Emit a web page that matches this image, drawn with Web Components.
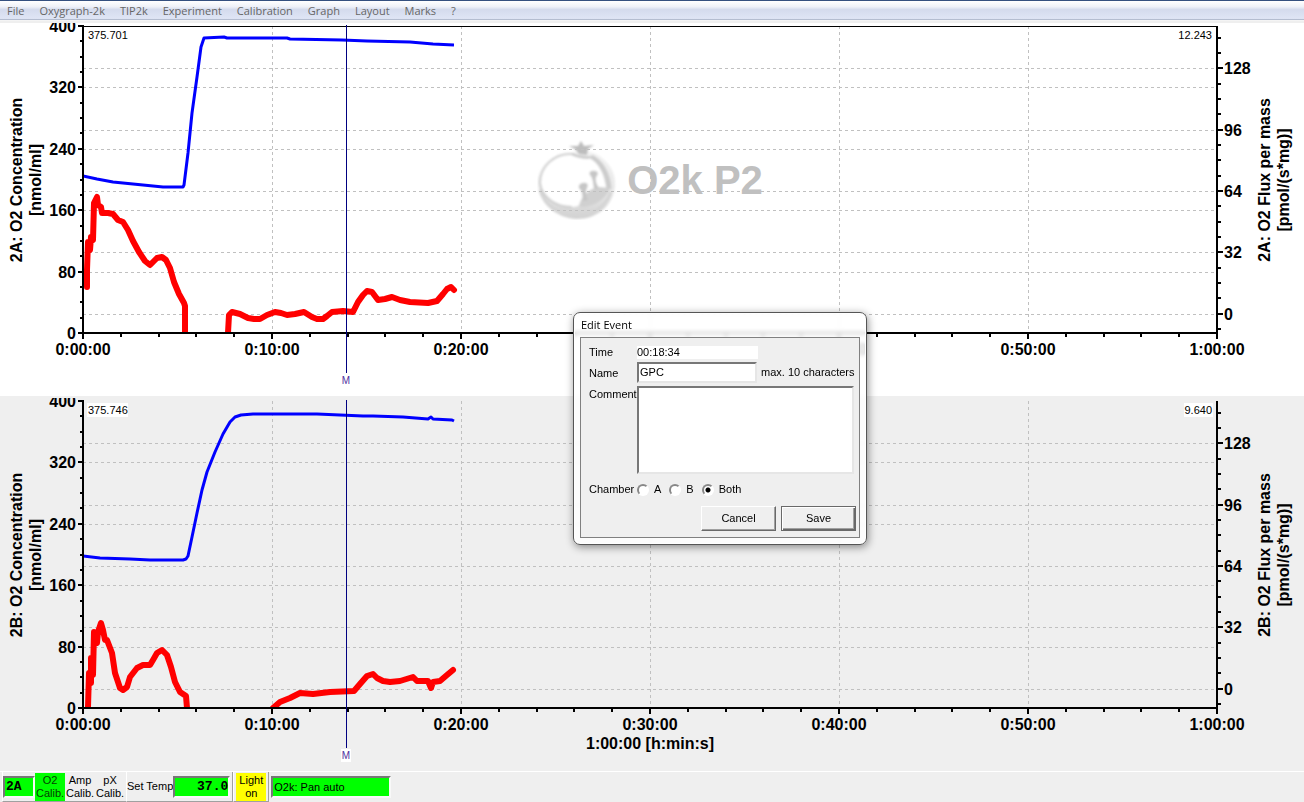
<!DOCTYPE html>
<html lang="en">
<head>
<meta charset="utf-8">
<title>Oxygraph-2k</title>
<style>
  html, body {
    margin: 0;
    height: 100%;
  }

  body {
    font-family: "Liberation Sans", Arial, sans-serif;
    font-size: 11px;
    color: #000;
    background: #efefef;
  }
</style>
</head>
<body>
<o2k-app></o2k-app>

<script>
const MENU = ["File", "Oxygraph-2k", "TIP2k", "Experiment", "Calibration", "Graph", "Layout", "Marks", "?"];

// trace points, in units of a 1134 x 307 plot
const TRACES = {
    A: {
        conc: ["0,150 14,153 30,156 50,158 80,161 100,161 101,159 105,127 109,87 114,51 118,21 121,12 141,11 144,12 204,12 207,13 259,14 284,15 327,16 350,18 371,19"],
        flux: [
            "4,261 4,244 5,216 7,224 8,211 10,214 11,177 14,171 15,179 18,181 19,187 25,187 30,188 35,194 40,196 45,204 50,215 56,226 62,235 67,239 70,236 74,232 79,231 83,234 87,242 91,256 96,268 101,277 102,280 102,307",
            "145,307 146,289 149,286 157,288 165,292 171,293 177,293 184,289 192,286 198,287 204,289 212,288 221,286 229,291 234,293 240,293 244,290 249,286 260,285 270,286 275,276 280,269 284,265 289,266 295,274 302,273 309,271 317,274 327,276 345,277 354,275 360,268 364,263 368,261 371,264"
        ]
    },
    B: {
        conc: ["0,155 17,157 47,158 67,159 100,159 103,158 105,155 109,136 114,112 119,89 124,71 132,51 140,33 147,21 152,16 158,14 170,13 234,13 280,15 290,15 320,16 345,18 348,16 350,18 369,19 371,20"],
        flux: [
            "5,306 6,272 8,282 8,257 10,274 11,231 14,242 15,231 18,222 20,229 22,239 24,239 29,252 32,272 37,287 40,289 44,286 47,276 54,267 60,264 67,264 70,259 74,252 79,249 84,254 88,266 92,281 97,291 103,295 104,307",
            "190,307 197,301 207,297 217,292 230,293 247,291 271,290 277,283 284,275 290,273 294,277 300,280 307,281 317,280 330,276 334,280 345,280 348,287 350,281 357,280 364,274 370,269"
        ]
    }
};

class MenuBar extends HTMLElement {
    constructor() {
        super();
        this.attachShadow({ mode: "open" });
    }

    connectedCallback() {
        this.shadowRoot.innerHTML = `
      <style>
        :host {
          display: block;
          box-sizing: border-box;
          height: 21px;
          border-top: 1px solid #34507f;
          border-bottom: 1px solid #f4f4f4;
          background: linear-gradient(#fff, #eef1f8 30%, #d4dbed 45%, #dfe5f5 92%, #b4bdd0 95%);
        }

        nav {
          display: flex;
          gap: 15px;
          padding: 0 7px;
        }

        button {
          border: 0;
          padding: 0;
          background: none;
          color: #666;
          font: 11px/19px "Open Sans", "Noto Sans", sans-serif;
        }
      </style>
      <nav>${MENU.map(item => `<button type="button">${item}</button>`).join("")}</nav>
    `;
    }
}

class PomegranateLogo extends HTMLElement {
    constructor() {
        super();
        this.attachShadow({ mode: "open" });
    }

    connectedCallback() {
        this.shadowRoot.innerHTML = `
      <style>
        :host {
          display: flex;
          align-items: center;
          gap: 10px;
          color: #c0c0c0;
          font: bold 40px/40px "Liberation Sans", Arial, sans-serif;
        }

        svg {
          display: block;
        }
      </style>
      <svg width="80" height="80" viewBox="0 0 80 80">
        <defs>
          <linearGradient id="skin" x1="0" y1="0" x2="0" y2="1">
            <stop offset="0" stop-color="#f2f2f2"/>
            <stop offset="0.6" stop-color="#e8e8e8"/>
            <stop offset="1" stop-color="#d0d0d0"/>
          </linearGradient>
          <filter id="soft"><feGaussianBlur stdDeviation="1"/></filter>
        </defs>
        <g filter="url(#soft)">
          <path d="M33 14C38 10 50 10 59 14C72 21 79 33 78 46C76 66 60 79 40 79C18 78 1 62 1 43C1 25 17 13 33 14Z" fill="url(#skin)"/>
          <path d="M3 50C8 66 22 76 40 76C56 76 68 67 74 52" fill="none" stroke="#d4d4d4" stroke-width="3"/>
          <path d="M54 17C64 22 71 34 72 49" fill="none" stroke="#cccccc" stroke-width="5"/>
          <path d="M35 14C17 13 3 27 3 43C5 58 19 67 35 67C41 67 44 64 47 61L59 50L69 48C67 35 62 22 52 18C46 18 41 17 35 14Z" fill="#fff"/>
          <path d="M52 18C46 18 41 17 35 14C17 13 3 27 3 43C5 58 19 67 35 67" fill="none" stroke="#cfcfcf" stroke-width="2"/>
          <path d="M42 66C43 58 52 48 62 47L73 48C70 58 58 66 46 67Z" fill="#d0d0d0"/>
          <path d="M46 61C45 54 46 52 42 48C41 45 44 43 46 43C50 42 52 45 50 48C48 52 49 56 51 60ZM57 49C56 42 56 38 53 35C51 32 55 30 58 31C61 31 62 34 59 37C58 41 60 45 62 48Z" fill="#c6c6c6"/>
          <path d="M42 14L38 9L32 6L41 6L44 1L47 6L57 5L51 9L50 15Z" fill="#bdbdbd"/>
          <path d="M35 14C41 17 47 18 54 17" fill="none" stroke="#c9c9c9" stroke-width="2"/>
        </g>
      </svg>
      <slot></slot>
    `;
    }
}

class O2kChart extends HTMLElement {
    constructor() {
        super();
        this.attachShadow({ mode: "open" });
    }

    connectedCallback() {
        this.render();
        this.onResize = () => this.render();
        window.addEventListener("resize", this.onResize);
    }

    disconnectedCallback() {
        window.removeEventListener("resize", this.onResize);
    }

    render() {
        const name = this.getAttribute("chamber");
        const shaded = this.hasAttribute("shaded");
        const bg = shaded ? "#efefef" : "#fff";
        const width = this.clientWidth;
        const height = this.offsetHeight;
        const left = 83;
        const right = width - 87;
        const top = 5;
        const bottom = height - 63;
        const plotW = right - left;
        const plotH = bottom - top;
        const middle = Math.round(top + plotH / 2);
        const cursor = Math.round(left + plotW * 0.2319);
        let grid = "";
        let ticks = "";
        let labels = "";

        // left axis: 0 to 400, 20 a tick
        for (let v = 0; v <= 400; v += 20) {
            const y = Math.round(bottom - plotH * v / 400);
            const major = v % 80 === 0;
            ticks += `<path d="M${left - (major ? 5 : 3)} ${y}H${left}"/>`;
            if (major) {
                labels += `<text x="${left - 7}" y="${y + 6}" text-anchor="end">${v}</text>`;
                if (v > 0 && v < 400) grid += `<path d="M${left} ${y + 0.5}H${right}"/>`;
            }
        }

        // right axis: -10 to 150, 8 a tick
        for (let v = -8; v <= 144; v += 8) {
            const y = Math.round(bottom - plotH * (v + 10) / 160);
            const major = v % 32 === 0;
            ticks += `<path d="M${right} ${y}H${right + (major ? 6 : 4)}"/>`;
            if (major) {
                labels += `<text x="${right + 7}" y="${y + 6}">${v}</text>`;
                grid += `<path d="M${left} ${y + 0.5}H${right}"/>`;
            }
        }

        // time axis: one hour, 2 minutes a tick
        for (let m = 0; m <= 60; m += 2) {
            const x = Math.round(left + plotW * m / 60);
            const major = m % 10 === 0;
            ticks += `<path d="M${x} ${bottom}V${bottom + (major ? 6 : 4)}"/>`;
            if (major) {
                const time = m === 60 ? "1:00:00" : `0:${String(m).padStart(2, "0")}:00`;
                labels += `<text x="${x}" y="${bottom + 22}" text-anchor="middle">${time}</text>`;
                if (m > 0 && m < 60) grid += `<path d="M${x + 0.5} ${top}V${bottom}"/>`;
            }
        }

        const lines = (list, cls) => list.map(p => `<polyline class="${cls}" points="${p}"/>`).join("");

        this.shadowRoot.innerHTML = `
      <style>
        :host {
          display: block;
          position: relative;
          box-sizing: border-box;
          flex: 1 0 300px;
          min-width: 0;
          border-top: 2px solid #efefef;
          overflow: hidden;
          background: ${bg};
        }

        .chart {
          display: block;
          position: relative;
          margin-top: -2px;
        }

        .grid path {
          stroke: #c0c0c0;
          stroke-dasharray: 3 3;
        }

        .axes path {
          stroke: #000;
          stroke-width: 2;
        }

        .labels text, .titles text {
          font: bold 16px "Liberation Sans", Arial, sans-serif;
        }

        .titles text {
          text-anchor: middle;
        }

        .values {
          font: 11px "Liberation Sans", Arial, sans-serif;
        }

        .conc, .flux {
          fill: none;
          stroke: #00f;
          stroke-width: 3;
          stroke-linejoin: round;
          vector-effect: non-scaling-stroke;
        }

        .flux {
          stroke: #f00;
          stroke-width: 6;
          stroke-linecap: round;
        }

        .mark {
          font: 10px "Liberation Sans", Arial, sans-serif;
          fill: #5030a0;
        }

        slot {
          position: absolute;
          top: 117px;
          left: ${left}px;
          right: 87px;
          display: flex;
          justify-content: center;
        }
      </style>
      <slot></slot>
      <svg class="chart" width="${width}" height="${height}">
        <g class="grid">${grid}</g>
        ${shaded ? "" : `<path d="M${left} ${top + 0.5}H${right}" stroke="#000"/>`}
        <svg x="${left}" y="${top}" width="${plotW}" height="${plotH}" viewBox="0 0 1134 307" preserveAspectRatio="none">
          ${lines(TRACES[name].conc, "conc")}
          ${lines(TRACES[name].flux, "flux")}
        </svg>
        <g class="axes">
          ${ticks}
          <path d="M${left} ${top - 1}V${bottom}M${left} ${bottom}H${right}M${right} ${top}V${bottom}"/>
        </g>
        <g class="labels">
          ${labels}
          ${this.hasAttribute("time-title") ? `<text x="${left + plotW / 2}" y="${bottom + 41}" text-anchor="middle">1:00:00 [h:min:s]</text>` : ""}
        </g>
        <g class="titles">
          <text transform="translate(22 ${middle}) rotate(-90)">2${name}: O2 Concentration</text>
          <text transform="translate(41 ${middle}) rotate(-90)">[nmol/ml]</text>
          <text transform="translate(${width - 34} ${middle}) rotate(-90)">2${name}: O2 Flux per mass</text>
          <text transform="translate(${width - 15} ${middle}) rotate(-90)">[pmol/(s*mg)]</text>
        </g>
        <g class="values">
          <rect x="${left + 4}" y="${top + 2}" width="41" height="14" fill="#fff"/>
          <text x="${left + 5}" y="${top + 13}">${this.getAttribute("conc")}</text>
          <rect x="${right - 33}" y="${top + 2}" width="29" height="14" fill="#fff"/>
          <text x="${right - 5}" y="${top + 13}" text-anchor="end">${this.getAttribute("flux")}</text>
        </g>
        <path d="M${cursor + 0.5} ${top - 1}V${bottom + 40}" stroke="#000080"/>
        <rect x="${cursor - 5}" y="${bottom + 41}" width="10" height="13" fill="#fff"/>
        <text class="mark" x="${cursor}" y="${bottom + 51}" text-anchor="middle">M</text>
      </svg>
    `;
    }
}

class EventDialog extends HTMLElement {
    constructor() {
        super();
        this.attachShadow({ mode: "open" });
    }

    connectedCallback() {
        this.shadowRoot.innerHTML = `
      <style>
        :host {
          display: block;
          position: absolute;
          z-index: 2;
          left: 573px;
          top: 312px;
          box-sizing: border-box;
          width: 294px;
          padding: 0 6px 6px;
          border: 1px solid #555;
          border-radius: 7px;
          background: rgba(255, 255, 255, 0.8);
          backdrop-filter: blur(2px);
          box-shadow: inset 0 0 0 1px #fff, 1px 2px 8px rgba(0, 0, 0, 0.45);
        }

        h1 {
          margin: 0;
          padding: 0 1px;
          font: 11px/24px "Open Sans", "Noto Sans", sans-serif;
        }

        form {
          display: grid;
          grid-template-columns: 48px 1fr;
          row-gap: 3px;
          padding: 8px 3px 6px 8px;
          border: 1px solid #808080;
          background: #efefef;
          line-height: 13px;
        }

        .row {
          display: flex;
          align-items: center;
          gap: 4px;
        }

        .name {
          padding-top: 5px;
        }

        .comment {
          padding-top: 2px;
        }

        input, textarea, button {
          box-sizing: border-box;
          margin: 0;
          font: inherit;
          color: inherit;
          border-radius: 0;
          outline: 0;
        }

        #time {
          width: 121px;
          height: 13px;
          padding: 0;
          border: 0;
        }

        #name {
          width: 120px;
          height: 21px;
          padding: 0 1px 2px;
        }

        #name, textarea {
          border: 2px solid;
          border-color: #777 #e6e6e6 #e6e6e6 #777;
          background: #fff;
        }

        textarea {
          display: block;
          width: 217px;
          height: 88px;
          resize: none;
        }

        fieldset {
          grid-column: 1 / 3;
          display: flex;
          align-items: center;
          margin: 0;
          padding: 6px 0 7px;
          border: 0;
        }

        .legend {
          width: 48px;
        }

        .choice {
          display: flex;
          align-items: center;
          gap: 5px;
          margin-right: 8px;
        }

        input[type=radio] {
          appearance: none;
          width: 12px;
          height: 12px;
          border: 2px solid;
          border-color: #888 #fff #fff #888;
          border-radius: 50%;
          background: #fff;
        }

        input[type=radio]:checked {
          background: radial-gradient(circle, #000 2px, #fff 3px);
        }

        .buttons {
          grid-column: 1 / 3;
          display: flex;
          justify-content: flex-end;
          gap: 5px;
        }

        button {
          width: 75px;
          height: 25px;
          padding: 0;
          border: 1px solid;
          border-color: #fff #696969 #696969 #fff;
          background: #efefef;
          box-shadow: inset -1px -1px #a0a0a0;
        }

        .default {
          border-color: #696969;
          box-shadow: inset 1px 1px #fff, inset -1px -1px #696969, inset -2px -2px #a0a0a0;
        }
      </style>
      <h1>Edit Event</h1>
      <form>
        <label for="time">Time</label>
        <div class="row"><input id="time" value="00:18:34" readonly></div>
        <label for="name" class="name">Name</label>
        <div class="row"><input id="name" value="GPC" maxlength="10"><span>max. 10 characters</span></div>
        <label for="comment" class="comment">Comment</label>
        <textarea id="comment"></textarea>
        <fieldset aria-label="Chamber">
          <span class="legend">Chamber</span>
          <label class="choice"><input type="radio" name="chamber">A</label>
          <label class="choice"><input type="radio" name="chamber">B</label>
          <label class="choice"><input type="radio" name="chamber" checked>Both</label>
        </fieldset>
        <div class="buttons">
          <button type="button">Cancel</button>
          <button type="button" class="default">Save</button>
        </div>
      </form>
    `;
    }
}

class StatusBar extends HTMLElement {
    constructor() {
        super();
        this.attachShadow({ mode: "open" });
    }

    connectedCallback() {
        this.shadowRoot.innerHTML = `
      <style>
        :host {
          display: flex;
          box-sizing: border-box;
          height: 31px;
          padding-left: 2px;
          border-top: 1px solid #fff;
          background: #efefef;
          line-height: 13px;
        }

        .group {
          display: flex;
          align-items: center;
          box-sizing: border-box;
          padding-right: 1px;
          border-bottom: 1px solid #a0a0a0;
          border-left: 1px solid #fff;
        }

        .closed {
          padding-right: 2px;
          border-right: 1px solid #a0a0a0;
        }

        .last {
          border: 0;
        }

        button {
          width: 30px;
          height: 28px;
          margin: 0;
          padding: 0;
          border: 0;
          background: none;
          color: inherit;
          font: inherit;
        }

        .box {
          box-sizing: border-box;
          height: 22px;
          margin: 0;
          padding: 0 1px;
          border: 2px solid;
          border-color: #777 #f8f8f8 #f8f8f8 #777;
          border-radius: 0;
          background: #0f0;
          color: #000;
          font: 11px/18px "Liberation Sans", Arial, sans-serif;
        }

        .mono {
          width: 32px;
          font: bold 13px/18px "Liberation Mono", monospace;
        }

        #temp {
          width: 57px;
          padding: 0;
          text-align: right;
        }

        .state {
          width: 120px;
          margin-left: 2px;
        }

        .on { background: #0f0; color: #044000; }
        .lit { background: #ff0; margin-left: 2px; }
      </style>
      <div class="group">
        <div class="box mono">2A</div>
        <button type="button" class="on">O2<br>Calib.</button>
        <button type="button">Amp<br>Calib.</button>
        <button type="button">pX<br>Calib.</button>
      </div>
      <div class="group closed">
        <label for="temp">Set Temp</label>
        <input id="temp" class="box mono" value="37.0">
      </div>
      <div class="group closed">
        <button type="button" class="lit">Light<br>on</button>
      </div>
      <div class="group last">
        <div class="box state">O2k: Pan auto</div>
      </div>
    `;
    }
}

class O2kApp extends HTMLElement {
    constructor() {
        super();
        this.attachShadow({ mode: "open" });
    }

    connectedCallback() {
        this.shadowRoot.innerHTML = `
      <style>
        :host {
          display: flex;
          flex-direction: column;
          position: relative;
          min-height: 100vh;
        }
      </style>
      <menu-bar></menu-bar>
      <o2k-chart chamber="A" conc="375.701" flux="12.243">
        <pomegranate-logo>O2k P2</pomegranate-logo>
      </o2k-chart>
      <o2k-chart chamber="B" conc="375.746" flux="9.640" shaded time-title></o2k-chart>
      <status-bar></status-bar>
      <event-dialog></event-dialog>
    `;
        this.shadowRoot.querySelectorAll("o2k-chart").forEach(chart => chart.render());
    }
}

customElements.define("menu-bar", MenuBar);
customElements.define("pomegranate-logo", PomegranateLogo);
customElements.define("o2k-chart", O2kChart);
customElements.define("event-dialog", EventDialog);
customElements.define("status-bar", StatusBar);
customElements.define("o2k-app", O2kApp);
</script>
</body>
</html>
